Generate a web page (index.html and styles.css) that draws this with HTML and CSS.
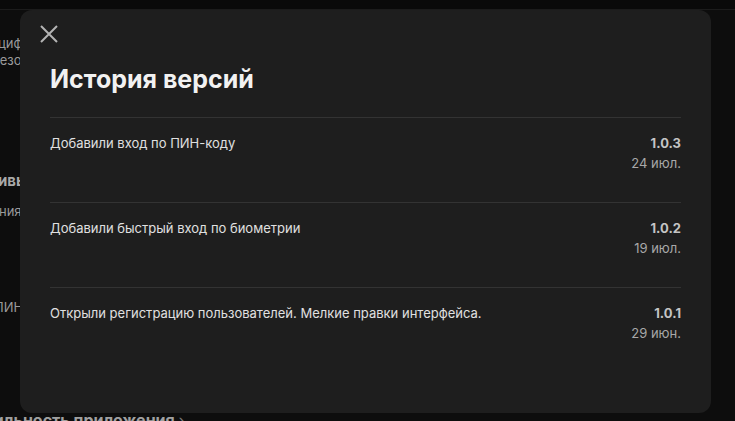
FILE: index.html
```html
<!DOCTYPE html>
<html lang="ru">
<head>
    <meta charset="UTF-8">
    <meta name="viewport" content="width=device-width, initial-scale=1.0">
    <title>История версий</title>
    <link rel="stylesheet" href="styles.css">
</head>
<body>

    <header class="topbar"></header>

    <!-- Page behind the modal -->
    <div class="page">
        <p class="line line-1">цифровой подписи документов</p>
        <p class="line line-2">безопасность входа</p>
        <p class="line line-3">ивью приложения</p>
        <p class="line line-4">ния и настройки</p>
        <p class="line line-5">ПИН-код</p>
        <p class="line line-6">Стабильность приложения <span class="chevron">&#8250;</span></p>
    </div>

    <!-- Version history modal -->
    <div class="modal">
        <button class="close-button" aria-label="Закрыть">
            <svg width="18" height="18" viewBox="0 0 18 18">
                <path d="M1 1 L17 17 M17 1 L1 17" stroke="#b4b4b4" stroke-width="2" fill="none"/>
            </svg>
        </button>

        <h1 class="modal-title">История версий</h1>

        <div class="versions">
            <div class="version-row">
                <p class="version-text">Добавили вход по ПИН-коду</p>
                <div class="version-meta">
                    <span class="version-number">1.0.3</span>
                    <span class="version-date">24 июл.</span>
                </div>
            </div>
            <div class="version-row">
                <p class="version-text">Добавили быстрый вход по биометрии</p>
                <div class="version-meta">
                    <span class="version-number">1.0.2</span>
                    <span class="version-date">19 июл.</span>
                </div>
            </div>
            <div class="version-row">
                <p class="version-text">Открыли регистрацию пользователей. Мелкие правки интерфейса.</p>
                <div class="version-meta">
                    <span class="version-number">1.0.1</span>
                    <span class="version-date">29 июн.</span>
                </div>
            </div>
        </div>
    </div>

</body>
</html>
```

FILE: styles.css
```css
html, body {
    height: 100%;
}

body {
    font-family: Inter, "Noto Sans", sans-serif;
    background-color: #0d0d0d;
    color: #e0e0e0;
    margin: 0;
    overflow: hidden;
}

.topbar {
    height: 9px;
    background-color: #0a0a0a;
    border-bottom: 1px solid #1c1c1c;
}

.page {
    margin-left: -2px;
    white-space: nowrap;
}

.line {
    margin: 0;
    font-size: 13px;
    line-height: 17px;
    color: #9a9a9a;
}

.line-1 {
    padding-top: 25px;
}

.line-2 {
    margin-left: -6px;
}

.line-3 {
    margin-top: 103px;
    font-size: 15px;
    font-weight: 700;
    color: #a8a8a8;
}

.line-4 {
    margin-top: 14px;
    margin-left: 1px;
}

.line-5 {
    margin-top: 79px;
    margin-left: -4px;
}

.line-6 {
    margin-top: 96px;
    margin-left: -43px;
    font-size: 16px;
    font-weight: 700;
    color: #a0a0a0;
}

.chevron {
    font-weight: 400;
    color: #777;
}

.modal {
    position: absolute;
    top: 10px;
    left: 20px;
    width: 691px;
    height: 403px;
    box-sizing: border-box;
    padding: 0 30px;
    background-color: #1e1e1e;
    border-radius: 12px;
}

.close-button {
    display: block;
    margin: 15px 0 0 -10px;
    padding: 0;
    width: 18px;
    height: 18px;
    background: none;
    border: none;
    cursor: pointer;
}

.close-button svg {
    display: block;
}

.modal-title {
    margin: 22px 0 0;
    font-size: 25px;
    line-height: 29px;
    font-weight: 700;
    color: #f2f2f2;
}

.versions {
    margin-top: 23px;
}

.version-row {
    display: flex;
    justify-content: space-between;
    align-items: flex-start;
    gap: 20px;
    height: 85px;
    padding-top: 15px;
    box-sizing: border-box;
    border-top: 1px solid #333;
}

.version-text {
    margin: 0;
    font-size: 13px;
    line-height: 20px;
    color: #e0e0e0;
}

.version-meta {
    display: flex;
    flex-direction: column;
    align-items: flex-end;
    font-size: 13px;
    line-height: 20px;
}

.version-number {
    font-weight: 700;
    color: #c4c4c4;
}

.version-date {
    color: #a8a8a8;
}
```
